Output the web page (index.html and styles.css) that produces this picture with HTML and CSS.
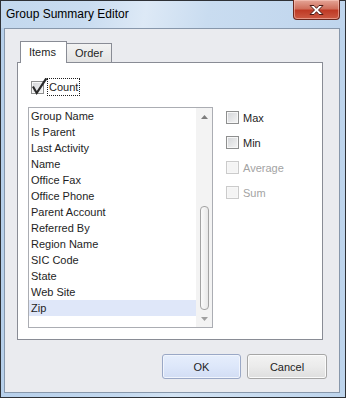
FILE: index.html
```html
<!DOCTYPE html>
<html lang="en">
<head>
    <meta charset="UTF-8">
    <meta name="viewport" content="width=device-width, initial-scale=1.0">
    <title>Group Summary Editor</title>
    <link rel="stylesheet" href="styles.css">
</head>
<body>
    <div class="window">
        <!-- Title bar -->
        <div class="titlebar">
            <span class="title">Group Summary Editor</span>
            <div class="close">
                <svg width="17" height="12" viewBox="0 0 17 12">
                    <path d="M2 1.5h4l2.5 2.8L11 1.5h4l-4.5 4.5 4.5 4.5h-4L8.5 7.7 6 10.5H2l4.5-4.5z" fill="#fff" stroke="#4b1a14" stroke-width="1" stroke-linejoin="round"/>
                </svg>
            </div>
        </div>

        <div class="client">
            <!-- Tabs -->
            <div class="tabs">
                <div class="tab active">Items</div>
                <div class="tab">Order</div>
            </div>

            <div class="panel">
                <label class="count-row">
                    <span class="box">
                        <svg class="tick" width="17" height="18" viewBox="0 0 17 18">
                            <path d="M2.5 9.5l3.2 5.5L14.8 1.2" fill="none" stroke="#2a2a2a" stroke-width="2.2" stroke-linecap="square"/>
                        </svg>
                    </span>
                    <span class="focus">Count</span>
                </label>

                <div class="panel-body">
                    <!-- Field list -->
                    <div class="listbox">
                        <ul class="items">
                            <li>Group Name</li>
                            <li>Is Parent</li>
                            <li>Last Activity</li>
                            <li>Name</li>
                            <li>Office Fax</li>
                            <li>Office Phone</li>
                            <li>Parent Account</li>
                            <li>Referred By</li>
                            <li>Region Name</li>
                            <li>SIC Code</li>
                            <li>State</li>
                            <li>Web Site</li>
                            <li class="selected">Zip</li>
                        </ul>
                        <div class="scrollbar">
                            <div class="arrow">
                                <svg width="7" height="4" viewBox="0 0 7 4"><path d="M0 4L3.5 0 7 4z" fill="#7d7d7d"/></svg>
                            </div>
                            <div class="track"><div class="thumb"></div></div>
                            <div class="arrow">
                                <svg width="7" height="4" viewBox="0 0 7 4"><path d="M0 0L3.5 4 7 0z" fill="#a0a0a0"/></svg>
                            </div>
                        </div>
                    </div>

                    <!-- Aggregates -->
                    <div class="aggregates">
                        <label class="check"><span class="box"></span>Max</label>
                        <label class="check"><span class="box"></span>Min</label>
                        <label class="check disabled"><span class="box"></span>Average</label>
                        <label class="check disabled"><span class="box"></span>Sum</label>
                    </div>
                </div>
            </div>

            <div class="buttons">
                <button class="btn default">OK</button>
                <button class="btn">Cancel</button>
            </div>
        </div>
    </div>
</body>
</html>
```

FILE: styles.css
```css
body {
    margin: 0;
    font-family: "Liberation Sans", Arial, sans-serif;
    font-size: 11px;
    color: #1e1e1e;
}

/* Window frame */
.window {
    width: 346px;
    height: 398px;
    box-sizing: border-box;
    border: 1px solid #2e3136;
    background: linear-gradient(90deg, #b6cfea 0%, #c4d9ef 35%, #d3e3f3 50%, #bdd4ec 100%);
    display: flex;
    flex-direction: column;
}

.titlebar {
    height: 27px;
    display: flex;
    align-items: flex-start;
    background: linear-gradient(100deg, #c3d8ee 0%, #c9dcf0 25%, #dde9f6 42%, #c9dcf0 60%, #bfd5ed 100%);
}

.title {
    font-size: 12px;
    color: #000;
    padding: 6px 0 0 5px;
}

.close {
    margin: -1px 5px 0 auto;
    width: 47px;
    height: 20px;
    box-sizing: border-box;
    border: 1px solid #6b271d;
    border-top: none;
    border-radius: 0 0 4px 4px;
    background: linear-gradient(180deg, #e4a597 0%, #d0705d 45%, #bf3a25 55%, #cc5a43 100%);
    box-shadow: inset 0 0 0 1px rgba(255, 210, 200, 0.5);
    display: flex;
    align-items: center;
    justify-content: center;
}

/* Client area */
.client {
    flex: 1;
    margin: 0 5px 4px 3px;
    border: 1px solid #8797ab;
    background: #eaebef;
    padding: 12px 12px 13px 12px;
    display: flex;
    flex-direction: column;
}

.tabs {
    display: flex;
    align-items: flex-end;
    height: 21px;
    padding-left: 3px;
}

.tab {
    position: relative;
    box-sizing: border-box;
    height: 19px;
    border: 1px solid #898c95;
    border-bottom: none;
    padding: 0 8px;
    line-height: 19px;
    background: linear-gradient(180deg, #f3f3f3, #e3e3e3);
    color: #1e1e1e;
}

.tab + .tab {
    margin-left: -1px;
    width: 46px;
}

.tab.active {
    z-index: 1;
    width: 47px;
    height: 22px;
    margin-bottom: -1px;
    background: #fff;
    line-height: 20px;
}

.panel {
    box-sizing: border-box;
    width: 306px;
    height: 278px;
    border: 1px solid #898c95;
    background: #fff;
    padding: 15px 0 0 10px;
}

/* Checkboxes */
.box {
    position: relative;
    display: inline-block;
    width: 13px;
    height: 13px;
    box-sizing: border-box;
    border: 1px solid #8e8f8f;
    background: linear-gradient(135deg, #d3d5d8, #f5f5f5);
    box-shadow: inset 0 0 0 1px #f7f7f7;
    flex: none;
}

.tick {
    position: absolute;
    left: -1px;
    top: -4px;
}

.count-row {
    display: flex;
    align-items: center;
    height: 18px;
    margin: 0 0 11px 3px;
    gap: 3px;
}

.focus {
    border: 1px dotted #1e1e1e;
    padding: 0 1px;
    line-height: 16px;
}

.panel-body {
    display: flex;
}

/* List */
.listbox {
    box-sizing: border-box;
    width: 185px;
    height: 221px;
    border: 1px solid #abadb3;
    display: flex;
}

.items {
    list-style: none;
    margin: 0;
    padding: 0;
    flex: 1;
}

.items li {
    height: 16px;
    line-height: 16px;
    padding-left: 2px;
}

.items li.selected {
    background: #dfe7f9;
}

.scrollbar {
    width: 16px;
    background: #f3f3f3;
    display: flex;
    flex-direction: column;
}

.arrow {
    height: 17px;
    display: flex;
    align-items: center;
    justify-content: center;
}

.track {
    flex: 1;
    display: flex;
    flex-direction: column;
    justify-content: flex-end;
    align-items: center;
}

.thumb {
    box-sizing: border-box;
    width: 9px;
    height: 104px;
    margin-left: 1px;
    border: 1px solid #a4a4a4;
    border-radius: 4px;
    background: linear-gradient(90deg, #fbfbfb, #e8e8e8);
}

.aggregates {
    margin-left: 13px;
    padding-top: 4px;
    display: flex;
    flex-direction: column;
    gap: 12px;
}

.check {
    display: flex;
    align-items: center;
    gap: 4px;
    height: 13px;
}

.check.disabled {
    color: #a3a3a3;
}

.check.disabled .box {
    border-color: #cbcbcb;
    background: #f4f4f4;
}

/* Buttons */
.buttons {
    margin-top: 14px;
    display: flex;
    justify-content: flex-end;
    gap: 6px;
}

.btn {
    box-sizing: border-box;
    width: 80px;
    height: 25px;
    border: 1px solid #a6a6a6;
    border-radius: 3px;
    background: linear-gradient(180deg, #f3f3f3 0%, #ebebeb 50%, #dedede 100%);
    box-shadow: inset 0 0 0 1px #fbfbfb;
    font-family: inherit;
    font-size: 11px;
    color: #1e1e1e;
    padding: 0;
}

.btn.default {
    width: 79px;
    border-color: #9aa8c6;
    background: linear-gradient(180deg, #e6eefc 0%, #dde7fa 50%, #d2ddf4 100%);
    box-shadow: inset 0 0 0 1px #f1f5fd;
}
```
